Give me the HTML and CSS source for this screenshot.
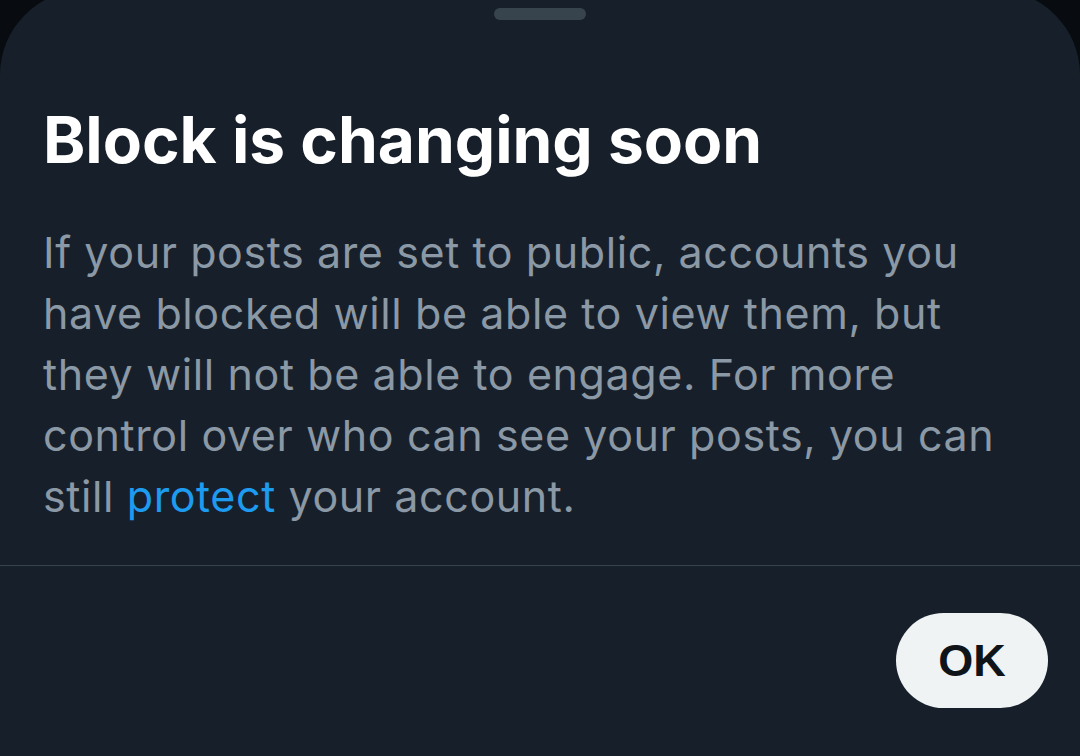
FILE: index.html
```html
<!DOCTYPE html>
<html>
<head>
<meta charset="utf-8">
<link rel="stylesheet" href="styles.css">
</head>
<body>
<div class="sheet">
  <div class="handle"></div>
  <div class="content">
    <h1 class="title">Block is changing soon</h1>
    <p class="body">If your posts are set to public, accounts you<br>have blocked will be able to view them, but<br>they will not be able to engage. For more<br>control over who can see your posts, you can<br>still <a class="link" href="#">protect</a> your account.</p>
  </div>
  <div class="divider"></div>
  <div class="actions">
    <button class="ok">OK</button>
  </div>
</div>
</body>
</html>
```
FILE: styles.css
```css
html, body {
  margin: 0;
  padding: 0;
  width: 1080px;
  height: 756px;
  overflow: hidden;
  background: #080c10;
}
.sheet {
  margin-top: -10px;
  height: 766px;
  background: #17202a;
  border-radius: 85px 85px 0 0;
  display: flex;
  flex-direction: column;
  font-family: Inter, "Noto Sans", sans-serif;
}
.handle {
  align-self: center;
  margin-top: 18px;
  width: 92px;
  height: 12px;
  border-radius: 6px;
  background: #38444d;
}
.content {
  padding: 0 43px;
}
.title {
  margin: 80px 0 0 0;
  font-size: 64px;
  font-weight: 700;
  line-height: 80px;
  color: #ffffff;
  letter-spacing: 0;
}
.body {
  margin: 42px 0 0 0;
  font-size: 43px;
  line-height: 61px;
  color: #8b98a5;
  letter-spacing: 0.6px;
}
.link {
  color: #1d9bf0;
  text-decoration: none;
}
.divider {
  margin-top: 38px;
  height: 1px;
  background: #38444d;
}
.actions {
  display: flex;
  justify-content: flex-end;
  padding: 47px 32px 0 0;
}
.ok {
  width: 152px;
  height: 95px;
  border: none;
  border-radius: 48px;
  background: #eff3f4;
  color: #0f1419;
  font-family: "Liberation Sans", Arial, sans-serif;
  font-weight: 700;
  font-size: 45px;
  padding: 0;
}
```
